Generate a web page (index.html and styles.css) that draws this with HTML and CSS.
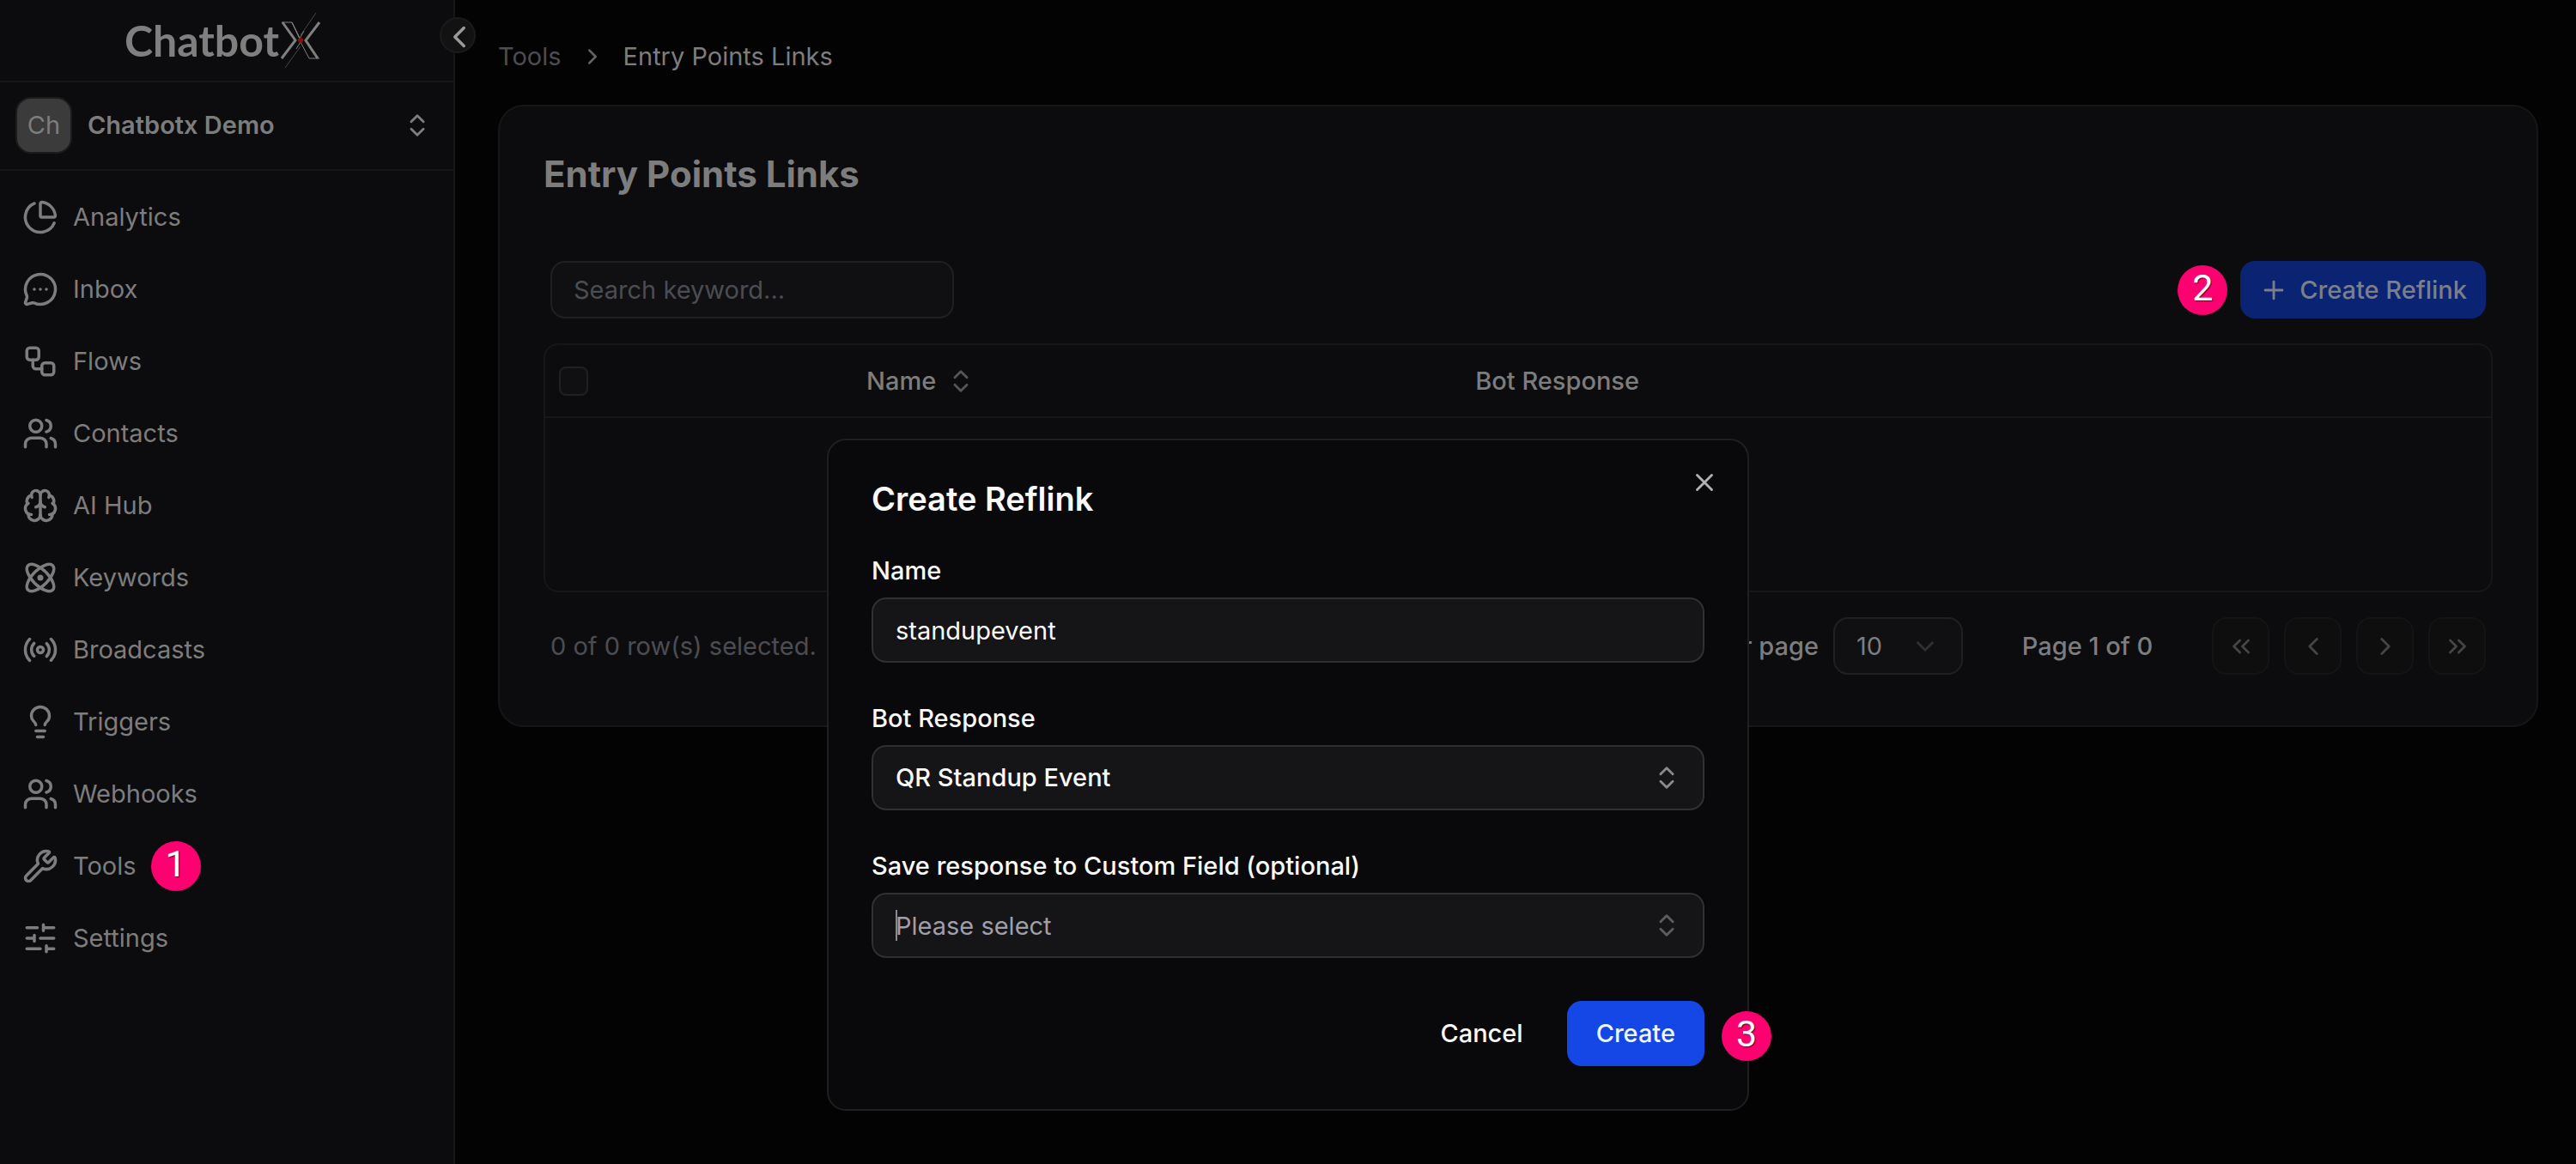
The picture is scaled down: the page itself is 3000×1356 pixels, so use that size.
FILE: index.html
```html
<!DOCTYPE html>
<html lang="en">
<head>
<meta charset="utf-8">
<meta name="viewport" content="width=device-width, initial-scale=1">
<title>Entry Points Links - ChatbotX</title>
<link rel="stylesheet" href="styles.css">
</head>
<body>
<svg class="sprite" aria-hidden="true">
  <symbol id="i-pie" viewBox="0 0 24 24"><path d="M21 12c.552 0 1.005-.449.95-.998a10 10 0 0 0-8.953-8.951c-.55-.055-.998.398-.998.95v8a1 1 0 0 0 1 1z"/><path d="M21.21 15.89A10 10 0 1 1 8 2.83"/></symbol>
  <symbol id="i-message" viewBox="0 0 24 24"><path d="M2.992 16.342a2 2 0 0 1 .094 1.167l-1.065 3.29a1 1 0 0 0 1.236 1.168l3.413-.998a2 2 0 0 1 1.099.092 10 10 0 1 0-4.777-4.719"/><path d="M8 12h.01M12 12h.01M16 12h.01"/></symbol>
  <symbol id="i-flow" viewBox="0 0 24 24"><rect x="3" y="3" width="8" height="8" rx="2"/><path d="M7 11v4a2 2 0 0 0 2 2h4"/><rect x="13" y="13" width="8" height="8" rx="2"/></symbol>
  <symbol id="i-users" viewBox="0 0 24 24"><path d="M16 21v-2a4 4 0 0 0-4-4H6a4 4 0 0 0-4 4v2"/><circle cx="9" cy="7" r="4"/><path d="M22 21v-2a4 4 0 0 0-3-3.87"/><path d="M16 3.13a4 4 0 0 1 0 7.75"/></symbol>
  <symbol id="i-brain" viewBox="0 0 24 24"><path d="M12 18V5"/><path d="M15 13a4.17 4.17 0 0 1-3-4 4.17 4.17 0 0 1-3 4"/><path d="M17.598 6.5A3 3 0 1 0 12 5a3 3 0 1 0-5.598 1.5"/><path d="M17.997 5.125a4 4 0 0 1 2.526 5.77"/><path d="M18 18a4 4 0 0 0 2-7.464"/><path d="M19.967 17.483A4 4 0 1 1 12 18a4 4 0 1 1-7.967-.517"/><path d="M6 18a4 4 0 0 1-2-7.464"/><path d="M6.003 5.125a4 4 0 0 0-2.526 5.77"/></symbol>
  <symbol id="i-atom" viewBox="0 0 24 24"><circle cx="12" cy="12" r="1"/><path d="M20.2 20.2c2.04-2.03.02-7.36-4.5-11.9-4.54-4.52-9.87-6.54-11.9-4.5-2.04 2.03-.02 7.36 4.5 11.9 4.54 4.52 9.87 6.54 11.9 4.5Z"/><path d="M15.7 15.7c4.52-4.54 6.54-9.87 4.5-11.9-2.03-2.04-7.36-.02-11.9 4.5-4.52 4.54-6.54 9.87-4.5 11.9 2.03 2.04 7.36.02 11.9-4.5Z"/></symbol>
  <symbol id="i-radio" viewBox="0 0 24 24"><path d="M4.9 19.1C1 15.2 1 8.8 4.9 4.9"/><path d="M7.8 16.2c-2.3-2.3-2.3-6.1 0-8.5"/><circle cx="12" cy="12" r="2"/><path d="M16.2 7.8c2.3 2.3 2.3 6.1 0 8.5"/><path d="M19.1 4.9C23 8.8 23 15.1 19.1 19"/></symbol>
  <symbol id="i-bulb" viewBox="0 0 24 24"><path d="M15 14c.2-1 .7-1.7 1.5-2.5 1-.9 1.5-2.2 1.5-3.5A6 6 0 0 0 6 8c0 1 .2 2.2 1.5 3.5.7.7 1.3 1.5 1.5 2.5"/><path d="M9 18h6"/><path d="M10 22h4"/></symbol>
  <symbol id="i-wrench" viewBox="0 0 24 24"><path d="M14.7 6.3a1 1 0 0 0 0 1.4l1.6 1.6a1 1 0 0 0 1.4 0l3.106-3.105c.32-.322.863-.22.983.218a6 6 0 0 1-8.259 7.057l-7.91 7.91a1 1 0 0 1-2.999-3l7.91-7.91a6 6 0 0 1 7.057-8.259c.438.12.54.662.219.984z"/></symbol>
  <symbol id="i-sliders" viewBox="0 0 24 24"><path d="M10 5H3M12 19H3M14 3v4M16 17v4M21 12h-9M21 19h-5M21 5h-7M8 10v4M8 12H3"/></symbol>
  <symbol id="i-updown" viewBox="0 0 24 24"><path d="m7 15 5 5 5-5"/><path d="m7 9 5-5 5 5"/></symbol>
  <symbol id="i-left" viewBox="0 0 24 24"><path d="m15 18-6-6 6-6"/></symbol>
  <symbol id="i-right" viewBox="0 0 24 24"><path d="m9 18 6-6-6-6"/></symbol>
  <symbol id="i-down" viewBox="0 0 24 24"><path d="m6 9 6 6 6-6"/></symbol>
  <symbol id="i-first" viewBox="0 0 24 24"><path d="m11 17-5-5 5-5"/><path d="m18 17-5-5 5-5"/></symbol>
  <symbol id="i-last" viewBox="0 0 24 24"><path d="m6 17 5-5-5-5"/><path d="m13 17 5-5-5-5"/></symbol>
  <symbol id="i-plus" viewBox="0 0 24 24"><path d="M5 12h14M12 5v14"/></symbol>
  <symbol id="i-close" viewBox="0 0 24 24"><path d="M18 6 6 18M6 6l12 12"/></symbol>
</svg>

<div class="app">
  <aside class="sidebar">
    <a class="logo" href="#" aria-label="ChatbotX">
      <span class="logo-word">Chatbot</span>
      <svg class="logo-x" viewBox="0 0 50 66" aria-hidden="true">
        <path class="logo-hair" d="M43 1 25 27M25 40 7 65"/>
        <path class="logo-line" d="M25 33 15 12 25 32M29 22 24 31 15 12H3M20 43l5-8 10 19h12"/>
        <path class="logo-bar" d="M47 12 31 33l14 21M4 12l15 21L3 54"/>
        <circle class="logo-dot" cx="25" cy="33" r="3"/>
      </svg>
    </a>
    <button class="collapse" type="button" aria-label="Collapse sidebar"><svg class="icon"><use href="#i-left"/></svg></button>
    <button class="workspace" type="button">
      <span class="avatar">Ch</span>
      <span class="workspace-name">Chatbotx Demo</span>
      <svg class="icon icon-sm"><use href="#i-updown"/></svg>
    </button>
    <nav class="nav">
      <a class="nav-link" href="#"><svg class="icon"><use href="#i-pie"/></svg>Analytics</a>
      <a class="nav-link" href="#"><svg class="icon"><use href="#i-message"/></svg>Inbox</a>
      <a class="nav-link" href="#"><svg class="icon"><use href="#i-flow"/></svg>Flows</a>
      <a class="nav-link" href="#"><svg class="icon"><use href="#i-users"/></svg>Contacts</a>
      <a class="nav-link" href="#"><svg class="icon"><use href="#i-brain"/></svg>AI Hub</a>
      <a class="nav-link" href="#"><svg class="icon"><use href="#i-atom"/></svg>Keywords</a>
      <a class="nav-link" href="#"><svg class="icon"><use href="#i-radio"/></svg>Broadcasts</a>
      <a class="nav-link" href="#"><svg class="icon"><use href="#i-bulb"/></svg>Triggers</a>
      <a class="nav-link" href="#"><svg class="icon"><use href="#i-users"/></svg>Webhooks</a>
      <a class="nav-link" href="#"><svg class="icon"><use href="#i-wrench"/></svg>Tools<span class="step">1</span></a>
      <a class="nav-link" href="#"><svg class="icon"><use href="#i-sliders"/></svg>Settings</a>
    </nav>
  </aside>

  <main class="main">
    <nav class="breadcrumb" aria-label="Breadcrumb">
      <a class="crumb" href="#">Tools</a>
      <svg class="icon icon-xs"><use href="#i-right"/></svg>
      <span>Entry Points Links</span>
    </nav>

    <section class="card">
      <h1 class="card-title">Entry Points Links</h1>
      <div class="toolbar">
        <input class="search" type="text" placeholder="Search keyword..." aria-label="Search keyword">
        <div class="toolbar-actions">
          <span class="step">2</span>
          <button class="create-link" type="button"><svg class="icon icon-sm"><use href="#i-plus"/></svg>Create Reflink</button>
        </div>
      </div>

      <div class="table-frame">
        <table class="table">
          <colgroup><col class="col-check"><col class="col-name"><col></colgroup>
          <thead>
            <tr>
              <th><input class="check" type="checkbox" aria-label="Select all"></th>
              <th><span class="sortable">Name<svg class="icon icon-sm"><use href="#i-updown"/></svg></span></th>
              <th>Bot Response</th>
            </tr>
          </thead>
          <tbody><tr><td colspan="3"></td></tr></tbody>
        </table>
      </div>

      <div class="pager">
        <p class="selected">0 of 0 row(s) selected.</p>
        <div class="page-size">
          <label for="rows">Rows per page</label>
          <span class="select-wrap">
            <select class="rows" id="rows"><option>10</option></select>
            <svg class="icon icon-sm"><use href="#i-down"/></svg>
          </span>
        </div>
        <p class="page-count">Page 1 of 0</p>
        <div class="page-buttons">
          <button class="page-button" type="button" aria-label="First page"><svg class="icon icon-sm"><use href="#i-first"/></svg></button>
          <button class="page-button" type="button" aria-label="Previous page"><svg class="icon icon-sm"><use href="#i-left"/></svg></button>
          <button class="page-button" type="button" aria-label="Next page"><svg class="icon icon-sm"><use href="#i-right"/></svg></button>
          <button class="page-button" type="button" aria-label="Last page"><svg class="icon icon-sm"><use href="#i-last"/></svg></button>
        </div>
      </div>
    </section>
  </main>
</div>

<div class="dialog" role="dialog" aria-labelledby="dialog-title">
  <h2 class="dialog-title" id="dialog-title">Create Reflink</h2>
  <button class="close" type="button" aria-label="Close"><svg class="icon icon-sm"><use href="#i-close"/></svg></button>
  <form class="form">
    <div class="field">
      <label for="name">Name</label>
      <input class="control" id="name" type="text" value="standupevent">
    </div>
    <div class="field">
      <label for="bot-response">Bot Response</label>
      <span class="select-wrap">
        <select class="control control-select" id="bot-response"><option>QR Standup Event</option></select>
        <svg class="icon icon-sm"><use href="#i-updown"/></svg>
      </span>
    </div>
    <div class="field">
      <label for="custom-field">Save response to Custom Field (optional)</label>
      <span class="select-wrap select-empty">
        <input class="control" id="custom-field" type="text" role="combobox" aria-expanded="false" placeholder="Please select">
        <span class="caret"></span>
        <svg class="icon icon-sm"><use href="#i-updown"/></svg>
      </span>
    </div>
    <div class="actions">
      <button class="button" type="button">Cancel</button>
      <button class="button button-primary" type="submit">Create</button>
    </div>
  </form>
  <span class="step step-float">3</span>
</div>
</body>
</html>
```
FILE: styles.css
```css
* {
  box-sizing: border-box;
}

:root {
  --text: #7d7d7e;
  --muted: #4c4c53;
  --panel: #0c0c0e;
  --line: #161618;
  --field: #101012;
  --field-line: #202022;
}

body {
  margin: 0;
  background: #030303;
  color: var(--text);
  font: 400 29px/42px Inter, "Liberation Sans", sans-serif;
}

button,
input,
select {
  margin: 0;
  font: inherit;
  color: inherit;
}

button {
  padding: 0;
  border: 0;
  background: none;
}

a {
  color: inherit;
  text-decoration: none;
}

p,
h1,
h2 {
  margin: 0;
}

.sprite {
  display: none;
}

.icon {
  flex: none;
  width: 42px;
  height: 42px;
  fill: none;
  stroke: currentColor;
  stroke-width: 2;
  stroke-linecap: round;
  stroke-linejoin: round;
}

.icon-sm {
  width: 34px;
  height: 34px;
}

.icon-xs {
  width: 30px;
  height: 30px;
  color: #636364;
}

.app {
  display: flex;
  min-height: 100vh;
}

/* Sidebar */

.sidebar {
  position: relative;
  flex: none;
  width: 530px;
  border-right: 2px solid var(--line);
  background: var(--panel);
}

.logo {
  display: flex;
  align-items: center;
  justify-content: center;
  height: 96px;
  padding-right: 8px;
  border-bottom: 2px solid var(--line);
}

.logo-word {
  font-family: Lato, sans-serif;
  font-size: 50px;
  font-weight: 700;
  color: #7f7f7f;
}

.logo-x {
  width: 50px;
  height: 66px;
}

.logo-hair,
.logo-line,
.logo-bar {
  fill: none;
  stroke: #7f7f7f;
  stroke-width: 1;
}

.logo-hair {
  opacity: 0.5;
}

.logo-bar {
  stroke-width: 3;
}

.logo-dot {
  fill: #8f0f08;
}

.collapse {
  position: absolute;
  top: 20px;
  right: -26px;
  display: grid;
  place-items: center;
  width: 42px;
  height: 42px;
  border: 2px solid #1b1b1d;
  border-radius: 50%;
  background: #121213;
  color: #999;
}

.workspace {
  display: flex;
  align-items: center;
  gap: 18px;
  width: 100%;
  height: 103px;
  padding: 0 25px 2px 18px;
  border-bottom: 2px solid var(--line);
  text-align: left;
}

.avatar {
  display: grid;
  place-items: center;
  width: 66px;
  height: 66px;
  border: 2px solid #1c1c1e;
  border-radius: 18px;
  background: #3b3b3b;
}

.workspace-name {
  flex: 1;
  font-weight: 600;
}

.nav {
  padding: 12px 26px;
}

.nav-link {
  display: flex;
  align-items: center;
  gap: 17px;
  height: 84px;
}

.step {
  display: grid;
  place-items: center;
  flex: none;
  width: 58px;
  height: 58px;
  padding-bottom: 6px;
  border-radius: 50%;
  background: #ff0070;
  color: #fff;
  font: 400 43px/48px Roboto, "Liberation Sans", sans-serif;
  text-shadow: 1px 1px 1px rgba(0, 0, 0, 0.6);
}

/* Main column */

.main {
  flex: 1;
  padding: 45px 44px 45px 50px;
}

.breadcrumb {
  display: flex;
  align-items: center;
  gap: 21px;
  margin-bottom: 35px;
}

.crumb {
  color: var(--muted);
}

.card {
  padding: 51px;
  border: 2px solid var(--line);
  border-radius: 30px;
  background: var(--panel);
}

.card-title {
  margin-bottom: 66px;
  font-size: 42px;
  line-height: 55px;
  font-weight: 700;
}

.toolbar,
.pager {
  display: flex;
  align-items: center;
  padding: 8px;
}

.toolbar {
  justify-content: space-between;
}

.search {
  width: 470px;
  height: 67px;
  padding: 0 25px;
  border: 2px solid var(--field-line);
  border-radius: 17px;
  background: var(--field);
}

.search::placeholder {
  color: var(--muted);
  opacity: 1;
}

.toolbar-actions {
  display: flex;
  align-items: center;
  gap: 15px;
}

.create-link {
  display: flex;
  align-items: center;
  gap: 13px;
  height: 67px;
  padding: 0 22px;
  border-radius: 17px;
  background: #0a2373;
  color: #7b7f8a;
  font-weight: 500;
}

.table-frame {
  margin: 21px 0;
  border: 2px solid var(--line);
  border-radius: 17px;
}

.table {
  width: 100%;
  table-layout: fixed;
  border-collapse: collapse;
}

.col-check {
  width: 15.8%;
}

.col-name {
  width: 31.3%;
}

.table th {
  height: 84px;
  padding: 0 16px;
  border-bottom: 2px solid var(--line);
  font-weight: 500;
  text-align: left;
}

.table td {
  height: 202px;
  padding: 0;
}

.check {
  appearance: none;
  display: block;
  width: 34px;
  height: 34px;
  border: 2px solid var(--field-line);
  border-radius: 8px;
  background: var(--field);
}

.sortable {
  display: flex;
  align-items: center;
  gap: 12px;
}

.sortable .icon {
  color: #555;
}

.selected {
  flex: 1;
  color: var(--muted);
}

.page-size {
  display: flex;
  align-items: center;
  gap: 17px;
  font-weight: 500;
}

.page-size .select-wrap {
  font-weight: 400;
}

.select-wrap {
  position: relative;
  display: block;
}

.select-wrap .icon {
  position: absolute;
  top: 50%;
  right: 27px;
  margin-top: -17px;
  pointer-events: none;
  color: #8a8a8b;
}

.select-empty .icon {
  color: #5d5d60;
}

.page-size .icon {
  color: #303033;
}

.rows {
  appearance: none;
  display: block;
  width: 151px;
  height: 67px;
  padding: 0 25px;
  border: 2px solid var(--field-line);
  border-radius: 17px;
  background: var(--field);
}

.page-count {
  width: 206px;
  margin: 0 42px;
  font-weight: 500;
  text-align: center;
}

.page-buttons {
  display: flex;
  gap: 17px;
}

.page-button {
  display: grid;
  place-items: center;
  width: 67px;
  height: 67px;
  border: 2px solid #141416;
  border-radius: 17px;
  background: #0e0e0f;
  color: #454546;
}

/* Dialog */

.dialog {
  position: absolute;
  top: 511px;
  right: 0;
  left: 0;
  width: 1074px;
  margin: 0 auto;
  padding: 50px;
  border: 2px solid #1f1f21;
  border-radius: 22px;
  background: #09090b;
  color: #fafafa;
}

.dialog-title {
  margin-bottom: 50px;
  font-size: 38px;
  line-height: 37px;
  font-weight: 600;
}

.close {
  position: absolute;
  top: 32px;
  right: 33px;
  display: block;
  width: 34px;
  height: 34px;
  color: #b2b2b3;
}

.close .icon {
  display: block;
}

.form {
  display: flex;
  flex-direction: column;
  gap: 50px;
}

.field {
  display: flex;
  flex-direction: column;
  gap: 16px;
}

.field label {
  line-height: 30px;
  font-weight: 500;
}

.control {
  display: block;
  width: 100%;
  height: 76px;
  padding: 0 26px;
  border: 2px solid #303033;
  border-radius: 17px;
  background: #151517;
}

.control::placeholder {
  color: #9f9fa9;
  opacity: 1;
}

.control-select {
  appearance: none;
  font-weight: 500;
}

.caret {
  position: absolute;
  top: 20px;
  left: 28px;
  width: 2px;
  height: 36px;
  background: #8a8a8f;
}

.actions {
  display: flex;
  justify-content: flex-end;
  gap: 17px;
}

.button {
  height: 76px;
  padding: 0 34px;
  border-radius: 17px;
  font-weight: 500;
}

.button-primary {
  background: #1447e6;
  color: #eff6ff;
}

.step-float {
  position: absolute;
  right: -28px;
  bottom: 56px;
}
```
